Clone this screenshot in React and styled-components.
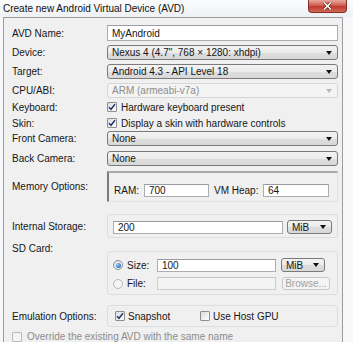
import React from 'react'
import styled, { createGlobalStyle } from 'styled-components'

const GlobalStyle = createGlobalStyle`
  body {
    margin: 0;
    background: #f7f8fa;
  }
`

const Page = styled.div`
  width: 353px;
  height: 342px;
  overflow: hidden;
  background: #f7f8fa;
  font-family: "Liberation Sans", Arial, sans-serif;
  font-size: 10px;
  color: #161616;
`

const TitleBar = styled.div`
  display: flex;
  align-items: flex-start;
  height: 17px;
  background: linear-gradient(#fbfcfd, #eef1f5);
`

const Title = styled.div`
  padding-left: 3px;
  line-height: 17px;
  color: #111;
`

const CloseButton = styled.div`
  margin-left: auto;
  margin-right: 6px;
  width: 39px;
  height: 13px;
  box-sizing: border-box;
  border: 1px solid #8b2d24;
  border-top: none;
  border-radius: 0 0 4px 4px;
  background: linear-gradient(#e7a89e, #d25f52 45%, #c0392d 55%, #cf6a5c);
  display: flex;
  align-items: center;
  justify-content: center;
`

const Window = styled.div`
  margin-left: 3px;
  width: 340px;
  height: 325px;
  box-sizing: border-box;
  border: 1px solid #9c9c9c;
  border-bottom: none;
  background: #f0f0f0;
  padding: 7px 4px 0 8px;
`

const Row = styled.div`
  display: flex;
  align-items: ${p => (p.$top ? 'flex-start' : 'center')};
  margin-top: ${p => p.$mt || 0}px;
  height: ${p => (p.$h ? `${p.$h}px` : 'auto')};
`

const Label = styled.div`
  width: 95px;
  flex-shrink: 0;
  line-height: 11px;
`

const Input = styled.div`
  box-sizing: border-box;
  height: ${p => p.$h || 13}px;
  ${p => (p.$w ? `width: ${p.$w}px;` : 'flex: 1;')}
  flex-shrink: 0;
  border: 1px solid ${p => (p.$disabled ? '#c9ccd1' : '#abadb3')};
  border-top-color: ${p => (p.$disabled ? '#c2c4c8' : '#9a9ca3')};
  background: ${p => (p.$disabled ? '#f4f4f4' : '#fff')};
  padding: 0 4px;
  display: flex;
  align-items: center;
`

const Combo = styled.div`
  box-sizing: border-box;
  height: ${p => p.$h || 15}px;
  ${p => (p.$w ? `width: ${p.$w}px;` : 'flex: 1;')}
  flex-shrink: 0;
  border: 1px solid ${p => (p.$disabled ? '#d6d6d6' : '#7a7a7a')};
  border-radius: 3px;
  background: ${p =>
    p.$disabled
      ? '#f4f4f4'
      : 'linear-gradient(#f3f3f3, #ebebeb 50%, #dedede 51%, #d8d8d8)'};
  padding: 0 5px 0 4px;
  display: flex;
  align-items: center;
  justify-content: space-between;
  color: ${p => (p.$disabled ? '#8d8d8d' : '#161616')};
`

const Arrow = styled.span`
  width: 0;
  height: 0;
  border-left: 3.5px solid transparent;
  border-right: 3.5px solid transparent;
  border-top: 4px solid ${p => (p.$disabled ? '#b8b8b8' : '#111')};
`

const Box = styled.span`
  box-sizing: border-box;
  width: 10px;
  height: 10px;
  flex-shrink: 0;
  border: 1px solid ${p => (p.$disabled ? '#b9b9b9' : '#8e8f8f')};
  border-radius: ${p => (p.$round ? '50%' : '1px')};
  background: ${p =>
    p.$disabled ? '#f4f4f4' : 'linear-gradient(135deg, #dcdcdc, #ffffff)'};
  display: flex;
  align-items: center;
  justify-content: center;
`

const Dot = styled.span`
  width: 5px;
  height: 5px;
  border-radius: 50%;
  background: radial-gradient(circle at 35% 35%, #9cd0f6, #2a6fc4 70%);
`

const CheckItem = styled.div`
  display: flex;
  align-items: center;
  gap: ${p => p.$gap || 4}px;
  ${p => (p.$w ? `width: ${p.$w}px;` : '')}
  flex-shrink: 0;
  color: ${p => (p.$muted ? '#8c8c8c' : '#161616')};
`

const Group = styled.div`
  box-sizing: border-box;
  flex: 1;
  height: ${p => p.$h}px;
  margin-top: ${p => p.$mt || 0}px;
  border: 1px solid #d9dee3;
  border-radius: 3px;
  padding: ${p => p.$pad};
  display: flex;
  flex-direction: column;
  justify-content: ${p => (p.$center ? 'center' : 'flex-start')};
  gap: ${p => p.$gap || 0}px;
`

const SunkenGroup = styled(Group)`
  border-radius: 0;
  border-width: 2px 1px 1px 2px;
  border-color: #a9a9a9 #e2e2e2 #e2e2e2 #7d7d7d;
`

const Line = styled.div`
  display: flex;
  align-items: center;
  gap: ${p => p.$gap || 0}px;
`

const Spacer = styled.span`
  width: ${p => p.$w}px;
  flex-shrink: 0;
`

const Button = styled.div`
  box-sizing: border-box;
  width: ${p => p.$w}px;
  height: 13px;
  border: 1px solid #c7c7c7;
  border-radius: 3px;
  background: #f4f4f4;
  color: #a2a2a2;
  display: flex;
  align-items: center;
  justify-content: center;
  flex-shrink: 0;
`

const Check = ({ checked, disabled }) => (
  <Box $disabled={disabled}>
    {checked && (
      <svg width="8" height="8" viewBox="0 0 8 8">
        <path d="M1 4.2 L3 6.3 L7 1.2" fill="none" stroke="#23386f" strokeWidth="1.5" />
      </svg>
    )}
  </Box>
)

const Radio = ({ selected, disabled }) => (
  <Box $round $disabled={disabled}>
    {selected && <Dot />}
  </Box>
)

const Select = ({ children, disabled, w, h }) => (
  <Combo $disabled={disabled} $w={w} $h={h}>
    <span>{children}</span>
    <Arrow $disabled={disabled} />
  </Combo>
)

export default function App() {
  return (
    <Page>
      <GlobalStyle />
      <TitleBar>
        <Title>Create new Android Virtual Device (AVD)</Title>
        <CloseButton>
          <svg width="11" height="8" viewBox="0 0 11 8">
            <path d="M2 0.5 L9 7.5 M9 0.5 L2 7.5" stroke="#6b1a12" strokeWidth="3" />
            <path d="M2 0.5 L9 7.5 M9 0.5 L2 7.5" stroke="#fff" strokeWidth="1.6" />
          </svg>
        </CloseButton>
      </TitleBar>
      <Window>
        <Row $h={16}>
          <Label>AVD Name:</Label>
          <Input $h={16}>MyAndroid</Input>
        </Row>
        <Row $mt={4} $h={15}>
          <Label>Device:</Label>
          <Select>Nexus 4 (4.7", 768 × 1280: xhdpi)</Select>
        </Row>
        <Row $mt={4} $h={15}>
          <Label>Target:</Label>
          <Select>Android 4.3 - API Level 18</Select>
        </Row>
        <Row $mt={4} $h={15}>
          <Label>CPU/ABI:</Label>
          <Select disabled>ARM (armeabi-v7a)</Select>
        </Row>
        <Row $mt={2} $h={14}>
          <Label>Keyboard:</Label>
          <CheckItem>
            <Check checked />
            Hardware keyboard present
          </CheckItem>
        </Row>
        <Row $mt={2} $h={14}>
          <Label>Skin:</Label>
          <CheckItem>
            <Check checked />
            Display a skin with hardware controls
          </CheckItem>
        </Row>
        <Row $mt={1} $h={15}>
          <Label>Front Camera:</Label>
          <Select>None</Select>
        </Row>
        <Row $mt={5} $h={15}>
          <Label>Back Camera:</Label>
          <Select>None</Select>
        </Row>
        <Row $mt={5}>
          <Label>Memory Options:</Label>
          <SunkenGroup $h={31} $pad="11px 0 0 5px">
            <Line>
              <Spacer $w={30}>RAM:</Spacer>
              <Input $w={65}>700</Input>
              <Spacer $w={5} />
              <Spacer $w={49}>VM Heap:</Spacer>
              <Input $w={66}>64</Input>
            </Line>
          </SunkenGroup>
        </Row>
        <Row $mt={12}>
          <Label>Internal Storage:</Label>
          <Group $h={24} $pad="5px 0 0 5px">
            <Line $gap={4}>
              <Input $w={170}>200</Input>
              <Select w={45} h={14}>MiB</Select>
            </Line>
          </Group>
        </Row>
        <Row $mt={5} $top>
          <Label>SD Card:</Label>
          <Group $h={44} $mt={8} $pad="6px 0 0 5px" $gap={5}>
            <Line>
              <CheckItem $w={44}>
                <Radio selected />
                Size:
              </CheckItem>
              <Input $w={119}>100</Input>
              <Spacer $w={5} />
              <Select w={44} h={14}>MiB</Select>
            </Line>
            <Line>
              <CheckItem $w={44}>
                <Radio disabled />
                File:
              </CheckItem>
              <Input $w={119} $disabled />
              <Spacer $w={6} />
              <Button $w={48}>Browse...</Button>
            </Line>
          </Group>
        </Row>
        <Row $mt={10}>
          <Label>Emulation Options:</Label>
          <Group $h={22} $pad="0 0 0 7px" $center>
            <Line>
              <CheckItem $w={85} $gap={3}>
                <Check checked />
                Snapshot
              </CheckItem>
              <CheckItem $gap={3}>
                <Check />
                Use Host GPU
              </CheckItem>
            </Line>
          </Group>
        </Row>
        <Row $mt={4}>
          <CheckItem $muted $gap={5}>
            <Check disabled />
            Override the existing AVD with the same name
          </CheckItem>
        </Row>
      </Window>
    </Page>
  )
}
